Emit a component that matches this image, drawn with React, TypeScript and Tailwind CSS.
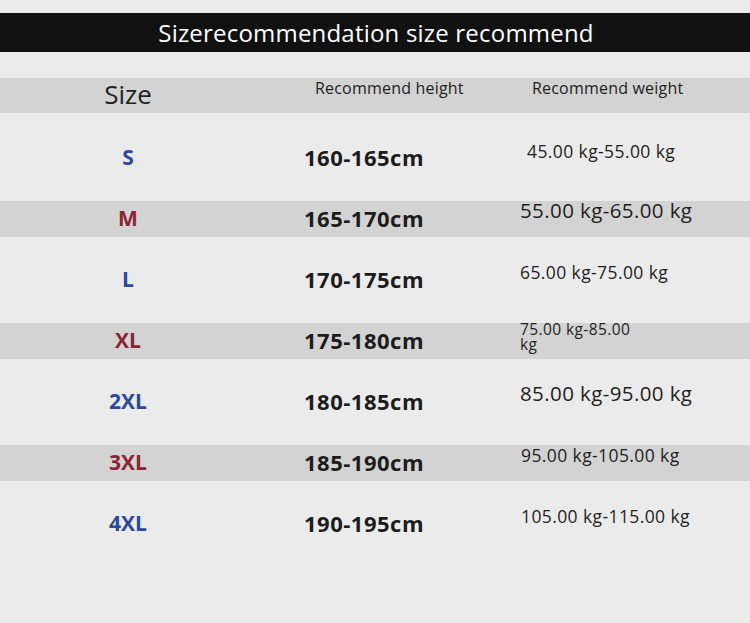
const rows = [
  { size: "S", color: "text-[#2b4a9b]", height: "160-165cm", weight: "45.00 kg-55.00 kg", wcls: "pl-[55px] text-[17.5px] -translate-y-[6px]", band: false },
  { size: "M", color: "text-[#8c2533]", height: "165-170cm", weight: "55.00 kg-65.00 kg", wcls: "pl-[48px] text-[20.5px] -translate-y-[8px]", band: true },
  { size: "L", color: "text-[#2b4a9b]", height: "170-175cm", weight: "65.00 kg-75.00 kg", wcls: "pl-[48px] text-[17.5px] -translate-y-[7px]", band: false },
  { size: "XL", color: "text-[#8c2533]", height: "175-180cm", weight: "75.00 kg-85.00 kg", wcls: "pl-[48px] text-[15.5px] leading-[15px] w-[170px] -translate-y-[4px]", band: true },
  { size: "2XL", color: "text-[#2b4a9b]", height: "180-185cm", weight: "85.00 kg-95.00 kg", wcls: "pl-[48px] text-[20.5px] -translate-y-[8px]", band: false },
  { size: "3XL", color: "text-[#8c2533]", height: "185-190cm", weight: "95.00 kg-105.00 kg", wcls: "pl-[49px] text-[17.5px] -translate-y-[7px]", band: true },
  { size: "4XL", color: "text-[#2b4a9b]", height: "190-195cm", weight: "105.00 kg-115.00 kg", wcls: "pl-[49px] text-[17.5px] -translate-y-[7px]", band: false },
]

export default function App() {
  return (
    <div className="w-[750px] h-[623px] bg-[#ebebeb] pt-[13px] overflow-hidden font-['Open_Sans',sans-serif]">
      <div className="h-[39px] bg-[#111111] flex items-center justify-center">
        <h1 className="text-white text-[24px] tracking-[0.2px] leading-none pl-[2px]">Sizerecommendation size recommend</h1>
      </div>

      <div className="mt-[26px] h-[35px] bg-[#d3d3d3] flex items-center text-[#222]">
        <div className="w-[256px] text-center text-[26px] leading-none -translate-y-[2px]">Size</div>
        <div className="w-[276px] pl-[59px] text-[16px] tracking-[0.2px] leading-none -translate-y-[8px]">Recommend height</div>
        <div className="text-[16px] tracking-[0.2px] leading-none -translate-y-[8px]">Recommend weight</div>
      </div>

      <div className="mt-[14px]">
        {rows.map((r) => (
          <div key={r.size} className="h-[61px] flex items-center">
            <div className={`h-[36px] w-full flex items-center ${r.band ? "bg-[#d3d3d3]" : ""}`}>
              <div className={`w-[256px] text-center font-bold text-[21px] ${r.color}`}>{r.size}</div>
              <div className="w-[216px] text-center font-bold text-[22px] tracking-[0.5px] text-[#1c1c1c]">{r.height}</div>
              <div className={`text-[#1f1f1f] tracking-[0.4px] ${r.wcls}`}>{r.weight}</div>
            </div>
          </div>
        ))}
      </div>
    </div>
  )
}
